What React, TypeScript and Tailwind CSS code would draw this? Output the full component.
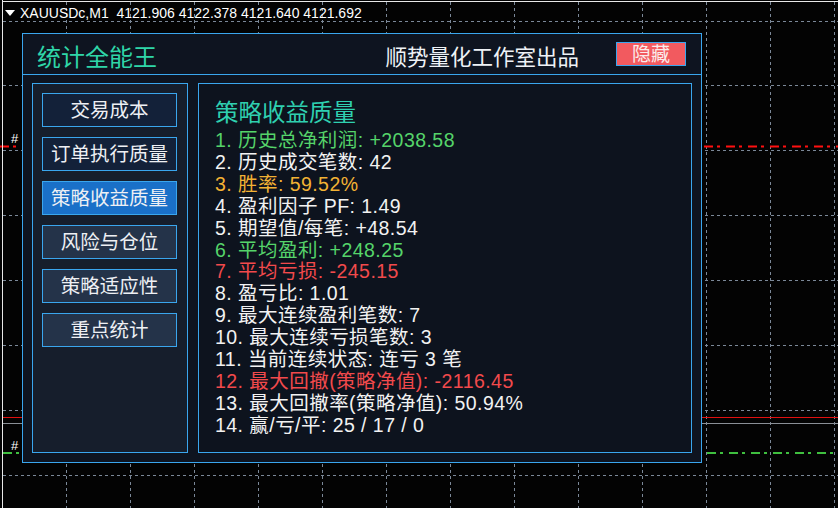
const hGrid = [21, 85, 150, 215, 280, 345, 410, 475]
const vGrid = [66, 130, 194, 258, 322, 386, 450, 514, 578, 642, 706, 770, 834]

const navItems = [
  { label: '交易成本', tone: 'dark' },
  { label: '订单执行质量', tone: 'dark' },
  { label: '策略收益质量', tone: 'active' },
  { label: '风险与仓位', tone: 'light' },
  { label: '策略适应性', tone: 'light' },
  { label: '重点统计', tone: 'light' },
]

const toneClass: Record<string, string> = {
  dark: 'bg-[#132139]',
  active: 'bg-[#1a70c8]',
  light: 'bg-[#243349]',
}

const stats = [
  { text: '1. 历史总净利润: +2038.58', color: 'text-[#55d46a]' },
  { text: '2. 历史成交笔数: 42', color: 'text-[#f2f2f2]' },
  { text: '3. 胜率: 59.52%', color: 'text-[#f3b234]' },
  { text: '4. 盈利因子 PF: 1.49', color: 'text-[#f2f2f2]' },
  { text: '5. 期望值/每笔: +48.54', color: 'text-[#f2f2f2]' },
  { text: '6. 平均盈利: +248.25', color: 'text-[#55d46a]' },
  { text: '7. 平均亏损: -245.15', color: 'text-[#f24a4c]' },
  { text: '8. 盈亏比: 1.01', color: 'text-[#f2f2f2]' },
  { text: '9. 最大连续盈利笔数: 7', color: 'text-[#f2f2f2]' },
  { text: '10. 最大连续亏损笔数: 3', color: 'text-[#f2f2f2]' },
  { text: '11. 当前连续状态: 连亏 3 笔', color: 'text-[#f2f2f2]' },
  { text: '12. 最大回撤(策略净值): -2116.45', color: 'text-[#f24a4c]' },
  { text: '13. 最大回撤率(策略净值): 50.94%', color: 'text-[#f2f2f2]' },
  { text: '14. 赢/亏/平: 25 / 17 / 0', color: 'text-[#f2f2f2]' },
]

function ChartBackdrop() {
  return (
    <svg className="absolute inset-0" width={838} height={508}>
      <rect width={838} height={508} fill="#030303" />
      {hGrid.map((y) => (
        <line key={'h' + y} x1={3} x2={838} y1={y + 0.5} y2={y + 0.5} stroke="#7b8898" strokeDasharray="3 3" />
      ))}
      {vGrid.map((x) => (
        <line key={'v' + x} x1={x + 0.5} x2={x + 0.5} y1={2} y2={508} stroke="#7b8898" strokeDasharray="3 3" />
      ))}
      <line x1={0} x2={838} y1={146.5} y2={146.5} stroke="#ff1010" strokeWidth={2} strokeDasharray="9 4 3 6" />
      <line x1={3} x2={838} y1={417.5} y2={417.5} stroke="#e01010" />
      <line x1={3} x2={838} y1={423.5} y2={423.5} stroke="#8a8f96" />
      <line x1={3} x2={838} y1={453} y2={453} stroke="#3fbf3f" strokeWidth={2} strokeDasharray="9 4 3 6" />
      <line x1={2.5} x2={2.5} y1={0} y2={508} stroke="#e8e8e8" />
      <line x1={2} x2={838} y1={1.5} y2={1.5} stroke="#e8e8e8" />
    </svg>
  )
}

export default function App() {
  return (
    <div
      className="relative w-[838px] h-[508px] overflow-hidden bg-black"
      style={{ fontFamily: '"Noto Sans", "Noto Sans CJK SC", sans-serif' }}
    >
      <ChartBackdrop />

      <div className="absolute left-[5px] top-[5px] flex items-center gap-[5px] text-[14px] leading-[16px] text-white font-['Liberation_Sans',sans-serif]">
        <svg width="10" height="8" viewBox="0 0 10 8">
          <polygon points="0,1 10,1 5,7" fill="#fff" />
        </svg>
        <span className="whitespace-pre">XAUUSDc,M1  4121.906 4122.378 4121.640 4121.692</span>
      </div>

      <span className="absolute left-[11px] top-[129px] text-[13px] text-white font-['Liberation_Sans',sans-serif]">#</span>
      <span className="absolute left-[11px] top-[436px] text-[13px] text-white font-['Liberation_Sans',sans-serif]">#</span>

      <div className="absolute left-[22px] top-[33px] w-[680px] h-[430px] flex flex-col border border-[#3aa6ee] bg-[#0e1420]">
        <div className="h-[41px] shrink-0 flex items-center justify-between border-b border-[#3aa6ee] pl-[14px] pr-[15px]">
          <span className="text-[24px] leading-none text-[#2fd6a8] mt-[6px]">统计全能王</span>
          <div className="flex items-center gap-[37px]">
            <span className="text-[21.5px] leading-none text-[#eef2f6] mt-[5px]">顺势量化工作室出品</span>
            <button className="w-[70px] h-[24px] border border-[#3aa6ee] bg-[#f25a5f] text-[19px] leading-none text-[#fbeaea]">
              隐藏
            </button>
          </div>
        </div>

        <div className="flex-1 flex gap-[10px] px-[9px] pt-[8px] pb-[9px]">
          <div className="w-[156px] border border-[#3aa6ee] bg-[#161e2c] pl-[9px] pt-[9px] flex flex-col gap-[10px]">
            {navItems.map((item) => (
              <div
                key={item.label}
                className={
                  'w-[135px] h-[34px] flex items-center justify-center border border-[#3aa6ee] text-[19.5px] text-[#eef0f4] ' +
                  toneClass[item.tone]
                }
              >
                {item.label}
              </div>
            ))}
          </div>

          <div className="flex-1 border border-[#3aa6ee] bg-[#0d131e] pl-[16px] pt-[13px]">
            <div className="text-[23.5px] leading-[30px] text-[#2fd0b0] mb-[3px]">策略收益质量</div>
            <div className="flex flex-col font-['Liberation_Sans','Noto_Sans_CJK_SC',sans-serif]">
              {stats.map((s) => (
                <div key={s.text} className={'text-[19.5px] leading-[21.9px] tracking-[0.45px] whitespace-pre ' + s.color}>
                  {s.text}
                </div>
              ))}
            </div>
          </div>
        </div>
      </div>
    </div>
  )
}
